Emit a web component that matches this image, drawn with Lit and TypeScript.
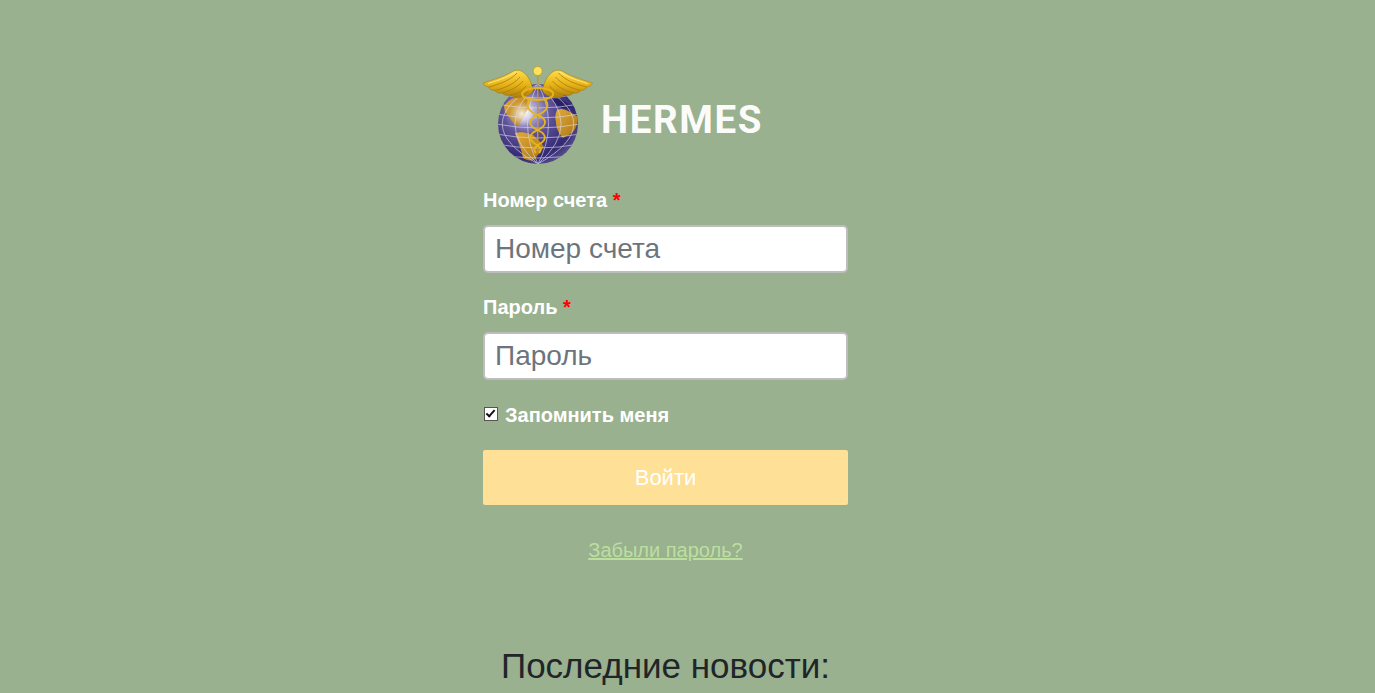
import { LitElement, html, css, svg } from "lit";
import { customElement } from "lit/decorators.js";

const wing = svg`
  <path d="M53 29 C52 20 47 11 40 8.500 C36 7.500 33 9 30 11 C23 15 12 18 3 21 C4 23.500 6 24.500 9 25 C9 27 12 28.500 15 28.500 C16 30.500 19 31.500 22 31 C24 33.500 28 34 31 33 C34 36 39 36.500 43 35 C47 34.500 51 32.500 53 29 Z" fill="url(#gold)" stroke="#9c7410" stroke-width=".5"/>
  <path d="M37 11 C31 18 20 22 9 25 M40 15 C34 22 25 26 15 28.500 M43 19 C38 25 30 29 22 31 M46 24 C42 29 37 32 31 33 M49 28 C46 31 44 33 43 35" fill="none" stroke="#a87c10" stroke-width=".8"/>
  <path d="M36 10 C30 14 20 18 8 21.500" fill="none" stroke="#ffeb8a" stroke-width=".9"/>
`;

const latitudes = [-30, -20, -10, 0, 10, 20, 30];
const longitudes = [-34, -22, -10, 10, 22, 34];

@customElement("app-root")
export class AppRoot extends LitElement {
  static styles = css`
    :host {
      display: block;
      height: 693px;
      overflow: hidden;
      background: #99b18f;
      font-family: "Liberation Sans", Arial, sans-serif;
    }
    .column {
      width: 365px;
      margin-left: 483px;
      padding-top: 62px;
    }
    .brand {
      display: flex;
      align-items: center;
      height: 108px;
      margin-left: -3px;
    }
    .logo { width: 120px; height: 108px; flex: none; }
    .brand-name {
      font-family: Roboto, sans-serif;
      font-weight: 700;
      font-size: 38.5px;
      line-height: 1;
      letter-spacing: 1.6px;
      color: #fff;
      margin-left: 1px;
      margin-top: 8px;
      opacity: 0.96;
    }
    .field { display: block; }
    .label {
      display: block;
      font-weight: 700;
      font-size: 20px;
      line-height: 27px;
      color: #fff;
      margin-bottom: 11px;
    }
    .req { color: #f00; }
    .first { margin-top: 17px; }
    .second { margin-top: 21px; }
    input.text {
      display: block;
      box-sizing: border-box;
      width: 100%;
      height: 48px;
      padding: 0 10px;
      border: 2px solid #bdbdbd;
      border-radius: 5px;
      background: #fff;
      font: 28px "Liberation Sans", Arial, sans-serif;
      color: #495057;
      outline: none;
    }
    input.text::placeholder { color: #6c757d; opacity: 1; }
    .remember {
      display: flex;
      align-items: center;
      margin-top: 22px;
      font-weight: 700;
      font-size: 20px;
      line-height: 27px;
      color: #fff;
    }
    .remember input {
      appearance: none;
      box-sizing: border-box;
      flex: none;
      width: 14px;
      height: 14px;
      margin: 0 7px 0 1px;
      border: 1.5px solid #555;
      background: #fff;
      position: relative;
      top: -2px;
    }
    .remember input:checked::after {
      content: "";
      position: absolute;
      left: 3px;
      top: 0;
      width: 3px;
      height: 7px;
      border: solid #111;
      border-width: 0 2px 2px 0;
      transform: rotate(42deg);
    }
    .submit {
      display: block;
      width: 100%;
      height: 55px;
      margin-top: 21px;
      border: 0;
      border-radius: 2px;
      background: #fee096;
      color: #fff;
      font: 22px "Liberation Sans", Arial, sans-serif;
    }
    .forgot {
      display: block;
      margin-top: 32px;
      text-align: center;
      font-size: 20px;
      line-height: 27px;
      color: #bcdf9f;
      text-decoration: underline;
    }
    h2 {
      margin: 82px 0 0;
      text-align: center;
      font-weight: 400;
      font-size: 35px;
      line-height: 40px;
      color: #212529;
      white-space: nowrap;
    }
  `;

  render() {
    return html`
      <div class="column">
        <div class="brand">
          <svg class="logo" viewBox="0 0 120 108" role="img" aria-label="Hermes logo">
            <defs>
              <radialGradient id="sea" cx="0.36" cy="0.34" r="0.78">
                <stop offset="0" stop-color="#f4f2f7"/>
                <stop offset="0.12" stop-color="#b7aed4"/>
                <stop offset="0.38" stop-color="#5f5398"/>
                <stop offset="0.75" stop-color="#332a74"/>
                <stop offset="1" stop-color="#6a6399"/>
              </radialGradient>
              <radialGradient id="shine" cx="0.5" cy="0.5" r="0.5">
                <stop offset="0" stop-color="#fff" stop-opacity=".85"/>
                <stop offset="1" stop-color="#fff" stop-opacity="0"/>
              </radialGradient>
              <linearGradient id="land" x1="0" y1="0" x2="1" y2="1">
                <stop offset="0" stop-color="#e3ab36"/>
                <stop offset="1" stop-color="#a8741a"/>
              </linearGradient>
              <linearGradient id="gold" x1="0" y1="0" x2="0" y2="1">
                <stop offset="0" stop-color="#ffdc4a"/>
                <stop offset="0.55" stop-color="#e5b015"/>
                <stop offset="1" stop-color="#a97c0c"/>
              </linearGradient>
              <clipPath id="ball"><circle cx="58" cy="62" r="40"/></clipPath>
            </defs>
            <circle cx="58" cy="62" r="40" fill="url(#sea)"/>
            <g clip-path="url(#ball)">
              <path d="M24 44 C28 38 36 34 46 34 C48 40 50 46 46 50 C44 56 41 58 38 65 C33 62 29 54 25 50 Z" fill="url(#land)"/>
              <path d="M35 71 C42 69 48 71 53 73 C57 77 62 81 64 85 C60 90 57 94 54 98 C50 99 46 98 43 96 C42 88 38 80 35 71 Z" fill="url(#land)"/>
              <path d="M77 48 C83 45 90 50 98 55 C98 60 96 66 94 69 C91 72 87 74 83 76 C79 72 76 66 76 60 C75 56 75 52 77 48 Z" fill="url(#land)"/>
              <path d="M73 37 C78 35 85 38 91 45 C86 48 80 46 76 43 Z" fill="#2a2266"/>
              <circle cx="42" cy="52" r="13" fill="url(#shine)"/>
              <g fill="none" stroke="#dcd9ea" stroke-width=".8" opacity=".8">
                ${longitudes.map((d) => svg`<path d="M58 22 Q${58 + d * 2.1} 62 58 102"/>`)}
                ${latitudes.map((d) => svg`<path d="M16 ${62 + d} Q58 ${62 + d + 8} 100 ${62 + d}"/>`)}
              </g>
            </g>
            ${wing}
            <g transform="matrix(-1 0 0 1 115.500 0)">${wing}</g>
            <g fill="none" stroke="#e7b417" stroke-width="1.9">
              <path d="M57.700 12 V90" stroke="#c99a12" stroke-width="1.4"/>
              <ellipse cx="57.700" cy="32" rx="15.500" ry="6"/>
              <path d="M50 37 C45 44 48 49 57.700 53 C67 57 68 63 57.700 68 C49 72 48 77 54 81 C60 85 63 87 59 91"/>
              <path d="M65 37 C70 44 67 49 57.700 53 C48 57 47 63 57.700 68 C66 72 67 77 61 81 C55 85 52 87 56 91"/>
            </g>
            <circle cx="57.700" cy="9" r="4.500" fill="#ffe15c" stroke="#b98a12" stroke-width=".6"/>
          </svg>
          <span class="brand-name">HERMES</span>
        </div>

        <label class="field first">
          <span class="label">Номер счета <span class="req">*</span></span>
          <input class="text" type="text" placeholder="Номер счета" />
        </label>
        <label class="field second">
          <span class="label">Пароль <span class="req">*</span></span>
          <input class="text" type="password" placeholder="Пароль" />
        </label>
        <label class="remember">
          <input type="checkbox" checked />Запомнить меня
        </label>
        <button class="submit" type="button">Войти</button>
        <a class="forgot" href="#">Забыли пароль?</a>
        <h2>Последние новости:</h2>
      </div>
    `;
  }
}
